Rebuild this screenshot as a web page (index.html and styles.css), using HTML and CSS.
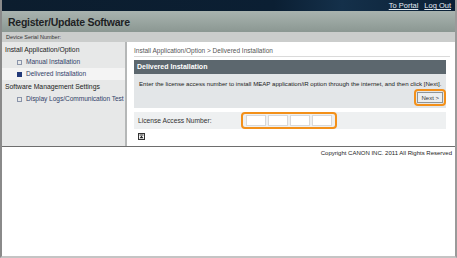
FILE: index.html
```html
<!DOCTYPE html>
<html>
<head>
    <title>Register/Update Software</title>
    <link rel="stylesheet" href="styles.css">
</head>
<body>
    <div class="frame">
        <div class="topbar">
            <a href="#">To Portal</a>
            <a href="#">Log Out</a>
        </div>
        <div class="header">
            <h1>Register/Update Software</h1>
        </div>
        <div class="serial">Device Serial Number:</div>

        <div class="layout">
            <div class="sidebar">
                <div class="group">Install Application/Option</div>
                <div class="item"><span class="bullet"></span>Manual Installation</div>
                <div class="item active"><span class="bullet"></span>Delivered Installation</div>
                <div class="group">Software Management Settings</div>
                <div class="item"><span class="bullet"></span>Display Logs/Communication Test</div>
            </div>

            <div class="content">
                <div class="breadcrumb">Install Application/Option &gt; Delivered Installation</div>

                <div class="box">
                    <div class="box-title">Delivered Installation</div>
                    <div class="box-body">
                        <p>Enter the license access number to install MEAP application/iR option through the internet, and then click [Next].</p>
                        <div class="box-actions">
                            <span class="highlight"><button class="next">Next &gt;</button></span>
                        </div>
                    </div>
                </div>

                <div class="license">
                    <span class="label">License Access Number:</span>
                    <span class="highlight inputs">
                        <input type="text">
                        <input type="text">
                        <input type="text">
                        <input type="text">
                    </span>
                </div>

                <div class="totop">
                    <svg width="7" height="7" viewBox="0 0 7 7">
                        <rect x="0.5" y="0.5" width="6" height="6" fill="#fff" stroke="#333"/>
                        <rect x="1.5" y="1.5" width="4" height="1" fill="#222"/>
                        <path d="M3.5 2.8 L5.6 5.3 L1.4 5.3 Z" fill="#222"/>
                    </svg>
                </div>
            </div>
        </div>

        <div class="copyright">Copyright CANON INC. 2011 All Rights Reserved</div>
    </div>
</body>
</html>
```

FILE: styles.css
```css
body {
    margin: 0;
    font-family: "Liberation Sans", Arial, sans-serif;
    background: #fff;
}
.frame {
    width: 453px;
    height: 256px;
    border-left: 2px solid #8a8a8a;
    border-right: 2px solid #9a9a9a;
    border-bottom: 2px solid #c4c4c4;
    display: flex;
    flex-direction: column;
}
.topbar {
    height: 11px;
    background: linear-gradient(to right, #0c1d2e 0%, #0b1f33 60%, #14304a 75%, #0b2035 100%);
    display: flex;
    justify-content: flex-end;
    align-items: center;
    gap: 6px;
    padding-right: 4px;
}
.topbar a {
    color: #e4ecf4;
    font-size: 7.5px;
    text-decoration: underline;
    line-height: 11px;
}
.header {
    height: 21px;
    background: linear-gradient(to bottom, #a9b3af 0%, #97a39e 60%, #8b9792 100%);
    display: flex;
    align-items: center;
    padding-left: 6px;
}
.header h1 {
    margin: 0;
    font-size: 10.5px;
    letter-spacing: -0.25px;
    font-weight: bold;
    color: #1e2224;
}
.serial {
    height: 10px;
    background: #cbcdcc;
    font-size: 5.5px;
    color: #333;
    line-height: 10px;
    padding-left: 4px;
}
.layout {
    display: flex;
    height: 104px;
    border-bottom: 1px solid #6e6e6e;
}
.sidebar {
    width: 123px;
    background: #e7e8e8;
    border-right: 2px solid #b5b7b7;
    padding-top: 1px;
    white-space: nowrap;
    overflow: hidden;
}
.group {
    font-size: 6.8px;
    color: #222;
    height: 13px;
    line-height: 13px;
    padding-left: 3px;
}
.item {
    font-size: 6.6px;
    letter-spacing: -0.05px;
    color: #34436a;
    height: 12px;
    line-height: 12px;
    padding-left: 15px;
    display: flex;
    align-items: center;
}
.item.active {
    background: #f4f4f4;
}
.bullet {
    width: 3px;
    height: 3px;
    border: 1px solid #8a94aa;
    margin-right: 4px;
    flex-shrink: 0;
}
.item.active .bullet {
    background: #243a7a;
    border-color: #243a7a;
}
.content {
    flex: 1;
    padding: 4px 5px 0 7px;
}
.breadcrumb {
    font-size: 6.5px;
    color: #555;
    height: 9px;
    line-height: 9px;
    padding-bottom: 1px;
    border-bottom: 1px solid #dadada;
}
.box {
    margin-top: 3px;
    width: 312px;
}
.box-title {
    background: #5c676e;
    color: #fff;
    font-size: 7px;
    font-weight: bold;
    height: 14px;
    line-height: 14px;
    padding-left: 3px;
}
.box-body {
    background: #e3e6e8;
    height: 34px;
    padding: 0 0 0 5px;
}
.box-body p {
    margin: 0;
    font-size: 6.1px;
    color: #222;
    padding-top: 6px;
    line-height: 8px;
}
.box-actions {
    display: flex;
    justify-content: flex-end;
    margin-top: 1px;
}
.highlight {
    display: inline-flex;
    border: 2px solid #f39019;
    border-radius: 4px;
    padding: 1px;
}
.next {
    font-family: "Liberation Sans", Arial, sans-serif;
    font-size: 6px;
    color: #333;
    background: #eceeef;
    border: 1px solid #8f9496;
    padding: 0 3px;
    height: 11px;
    margin: 0;
}
.license {
    margin-top: 4px;
    width: 312px;
    height: 17px;
    background: #eef0f1;
    display: flex;
    align-items: center;
}
.license .label {
    font-size: 6.7px;
    color: #333;
    width: 103px;
    padding-left: 4px;
}
.inputs {
    gap: 2px;
    padding: 1px 3px;
}
.inputs input {
    width: 18px;
    height: 9px;
    border: 1px solid #d8d8d8;
    background: #fff;
    padding: 0;
    margin: 0;
}
.totop {
    margin: 4px 0 0 4px;
    line-height: 0;
}
.copyright {
    text-align: right;
    font-size: 6px;
    color: #222;
    padding: 3px 3px 0 0;
}
```
